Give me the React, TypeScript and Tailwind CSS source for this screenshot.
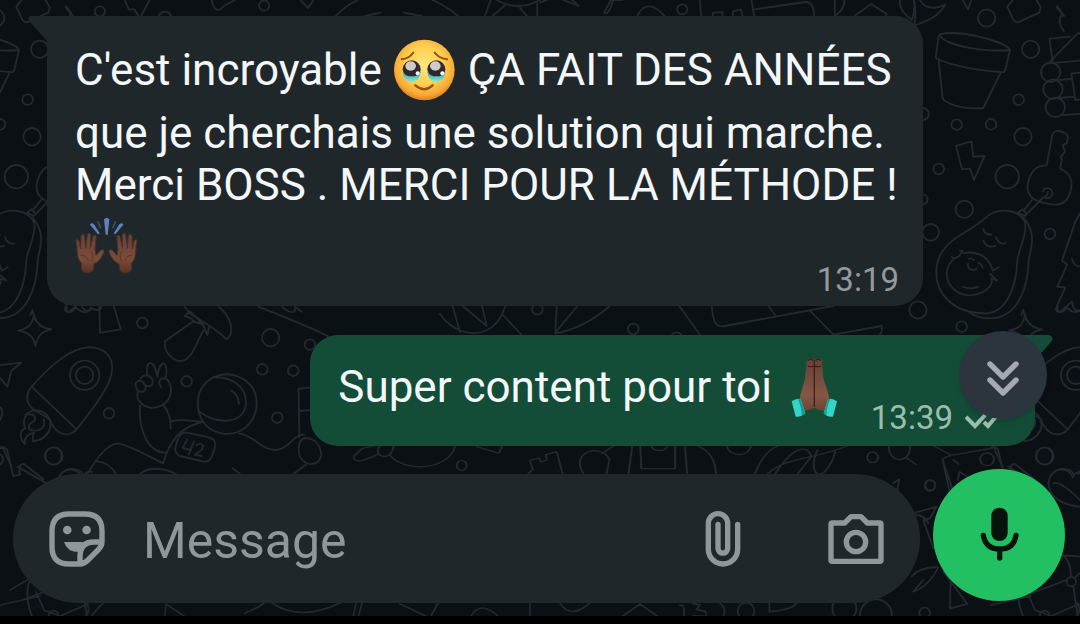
import React from "react";

function DoodleTile() {
  return (
    <g id="doodles">
      <g transform="translate(0 300) scale(0.3333)">
        <path d="M102 42C106 66 122 84 154 88C126 92 112 108 106 138C102 110 88 98 54 92C84 86 98 74 102 42Z" />
        <path d="M95 260C140 210 190 160 245 145C310 132 345 170 335 220C325 270 275 330 230 388ZM95 260C80 275 78 300 88 315C100 335 130 340 150 360C160 385 175 403 200 403C212 402 222 398 230 388" />
        <circle cx="254" cy="226" r="44" />
        <circle cx="254" cy="226" r="26" />
        <path d="M98 332C70 340 68 370 76 385C58 390 58 415 74 432C72 410 85 402 102 398C98 408 96 415 100 424C135 418 158 395 150 360C140 338 122 328 98 332ZM76 345C95 340 110 345 104 362C80 375 82 390 100 392C122 392 136 385 132 358" />
        <circle cx="327" cy="340" r="16" />
        <circle cx="427" cy="69" r="16" />
        <path d="M298 20L300 98L362 88L342 20M200 20C196 40 215 42 228 22C245 42 268 40 272 22C285 34 302 32 304 20" />
        <path d="M410 265C398 245 420 235 432 250C446 270 425 285 410 268M422 236C430 220 455 225 458 242C460 262 440 264 430 250M442 225C434 180 462 172 472 230C478 178 506 176 498 230M484 262C468 240 490 225 505 242C528 285 500 322 452 324C415 315 408 290 414 275M420 316C415 380 440 460 500 458M490 314C505 335 514 360 512 385M512 364C545 356 580 362 608 366C540 380 505 430 490 490C445 470 400 440 355 430C320 432 290 475 262 522M290 484C315 485 335 500 348 522" />
        <circle cx="560" cy="244" r="16" />
        <path d="M640 232C700 205 772 245 770 312C768 370 720 410 665 400C615 390 590 350 594 300C596 270 615 245 640 232ZM640 232C690 230 740 255 738 310C734 375 645 375 598 334M694 272C708 280 716 294 717 311" />
        <path d="M560 398L628 412Q652 420 644 445L634 472Q628 488 608 484L540 468Q520 458 528 436L536 412Q544 396 560 398ZM562 418L548 444L574 450M582 424L566 464M590 436C602 424 618 438 604 450L584 464L606 468" />
        <path d="M718 400C770 410 780 450 830 450C870 446 880 402 912 404M915 414C945 415 962 435 964 465C958 500 915 500 900 470C890 440 900 416 915 414ZM898 412L896 266L940 262M896 333L940 330M918 494L880 522M698 505L720 522" />
        <path d="M554 20C580 60 620 60 680 118C705 100 695 50 656 20M554 48L570 34L595 58L612 80L622 105L628 78M554 48L575 56L582 66L610 72M582 62L495 124C490 165 530 188 550 182C580 170 590 125 610 92" />
        <circle cx="812" cy="113" r="26" />
        <circle cx="930" cy="134" r="16" />
        <circle cx="787" cy="208" r="16" />
        <circle cx="880" cy="212" r="16" />
        <circle cx="832" cy="353" r="16" />
        <circle cx="162" cy="468" r="26" />
        <path d="M775 20C850 50 930 80 990 112M845 20C870 42 890 42 885 20L905 35" />
        <path d="M-40 200L64 188L34 212L22 260L-4 228M0 322Q14 330 0 360M0 442Q16 438 22 452L40 528L60 524C55 500 60 490 72 492L130 538M180 528C195 500 235 500 250 524M420 522C445 500 490 502 528 522" />
      </g>
      <g transform="translate(910 0) scale(0.3333)">
        <path d="M90 103C150 88 290 125 300 150L286 210Q284 218 272 216C190 210 130 200 77 174L86 108ZM90 103C92 130 205 158 300 150M86 180L98 296C120 320 180 328 220 324L272 218" />
        <circle cx="230" cy="54" r="26" />
        <circle cx="362" cy="148" r="26" />
        <circle cx="326" cy="299" r="16" />
        <circle cx="140" cy="374" r="16" />
        <circle cx="243" cy="373" r="16" />
        <circle cx="339" cy="410" r="26" />
        <circle cx="86" cy="507" r="16" />
        <circle cx="292" cy="530" r="35" />
        <circle cx="163" cy="628" r="26" />
        <circle cx="62" cy="697" r="25" />
        <circle cx="38" cy="342" r="18" />
        <circle cx="38" cy="598" r="15" />
        <circle cx="420" cy="702" r="16" />
        <circle cx="24" cy="930" r="26" />
        <path d="M138 438L184 424L190 470L224 468L192 540L180 506L156 508Z" />
        <path d="M158 0L174 28L184 0M292 20L308 0M292 20L310 60L322 68L388 38L392 22L380 0M12 0Q20 40 12 78M30 0C42 25 75 30 106 14C85 50 50 64 14 76M440 22L456 42Q440 65 462 94" />
        <path d="M418 116L480 110M418 116L428 184M415 190L505 98L530 120M415 190L530 180M484 220L530 216M484 220L496 300L530 296M450 240L486 236M450 294L494 290M450 346L530 340" />
        <circle cx="422" cy="217" r="29" />
        <circle cx="429" cy="268" r="29" />
        <circle cx="436" cy="322" r="29" />
        <path d="M410 496L426 410Q430 390 448 393Q476 398 474 415L470 430L458 435L465 455L452 472L456 480L450 506C485 520 490 550 480 580C470 612 445 620 410 610C370 605 345 585 355 545C365 505 385 496 410 496M398 574A15 15 0 1 1 404 592M414 576Q412 590 398 594L344 648L324 638L338 628L350 642M344 628L366 600" />
        <path d="M225 655C260 620 330 625 346 670C350 710 330 735 322 780C320 850 295 940 225 940C130 940 70 880 80 800C90 720 175 700 225 655ZM340 652C380 700 365 735 356 780C354 870 320 955 240 955Q205 955 180 938M126 770L132 776C85 820 120 885 180 886C230 884 252 850 243 836L262 842M150 752L158 752L148 768L132 776M160 760C205 750 240 775 248 812L266 802M240 822L262 842M220 686Q222 704 244 704M258 712Q266 735 286 730M220 722Q230 746 256 738M176 776Q185 775 192 780M174 792C172 812 195 812 200 806M206 788Q216 794 218 804M158 860Q185 870 204 860" />
        <path d="M510 640L496 665L456 782L472 794L442 860L466 862L438 925Q438 938 450 936L486 905Q490 940 515 930M486 776Q492 802 515 800M334 945L340 930L348 960" />
      </g>
      <g transform="translate(440 290) scale(0.3333)">
        <path d="M0 72C45 140 160 165 196 48M38 48L60 126M68 48L140 108L126 48M190 76L244 134M350 48L346 128L412 48M510 48C460 90 410 120 346 130M718 48L780 134M815 48C820 85 820 115 855 108L1180 48M985 48L1005 74M1110 62L1180 134M1180 134L1325 108Q1328 125 1320 134" />
        <circle cx="292" cy="58" r="16" />
        <circle cx="580" cy="117" r="16" />
        <circle cx="710" cy="143" r="16" />
        <circle cx="1565" cy="110" r="16" />
      </g>
      <g transform="translate(300 430) scale(0.4975 0.3333)" strokeWidth="4">
        <path d="M108 80L125 55L160 44M108 80Q108 108 155 74M160 48C145 85 185 95 188 48M180 75C210 130 300 120 312 48M355 50L400 70L406 48M458 132L468 118L462 92L480 84L485 96L496 90L494 74L516 66L528 132M570 132C540 60 610 40 622 90L616 132M608 70L630 48M668 48L660 132M684 48L686 116L754 116L754 48M706 48C710 66 736 66 738 48M774 48L778 132M800 48Q835 70 836 132M858 48C862 82 904 82 906 48M914 132C925 90 940 60 960 48M955 132C990 50 1020 40 1028 80L1000 132M940 132C975 80 1030 90 1100 48M1040 60C1025 110 1035 150 1055 125Q1070 100 1076 65M1184 48C1180 100 1228 104 1226 48M1220 84L1238 104M1274 48L1308 74M1308 76L1395 54L1412 110M1292 92Q1290 84 1308 76M1292 92L1312 180M1322 150L1326 125L1345 145M1455 32Q1475 38 1488 0" />
        <ellipse cx="325" cy="107" rx="10" ry="15" />
        <ellipse cx="1151" cy="82" rx="11" ry="16" />
        <ellipse cx="1267" cy="165" rx="10" ry="15" />
        <ellipse cx="1381" cy="88" rx="14" ry="19" />
        <ellipse cx="1496" cy="78" rx="17" ry="26" />
      </g>
      <g transform="scale(0.3444 0.3333)">
        <path d="M192 18L212 48M362 0L374 28L390 28L402 48M434 0L410 48M614 0Q625 48 650 18L682 0M872 0L895 24L910 0M975 48Q1005 15 1040 0M1060 48L1105 38M1172 38L1225 48M1255 0Q1300 20 1330 48M1425 0L1408 48M1442 0Q1505 36 1568 0M1468 14L1430 48M1510 24L1530 48M1560 10V48" />
        <circle cx="290" cy="34" r="15" />
        <circle cx="767" cy="17" r="15" />
        <circle cx="479" cy="54" r="19" />
      </g>
      <g transform="translate(540 0) scale(0.3444 0.3333)">
        <path d="M0 8L20 0M68 0L112 18L94 0M206 0L186 38Q200 48 212 0L240 0M282 48Q310 -10 362 48M464 0L468 48M614 0L622 48M502 48V38L530 36V48M560 48V34L584 28L588 48M624 28L770 6Q795 4 796 48M856 0L856 48Q885 28 884 0M916 46L962 12L1006 42L1004 48M1045 0Q1040 30 1080 60Q1090 30 1086 0" />
        <circle cx="413" cy="28" r="15" />
      </g>
      <g transform="translate(680 460) scale(0.3333)">
        <path d="M788 0L812 110M820 0L836 12M985 20L1090 80M640 70L658 58L652 90M705 158L770 140L750 175L730 180L760 265M745 190Q735 165 705 165M695 350Q720 320 775 322Q745 380 700 395L730 360M790 335L862 432L810 446L812 360M1200 140C1080 130 1090 30 1145 28Q1170 30 1178 52Q1190 30 1210 36M1120 70Q1140 60 1200 120M1030 470C980 350 1060 270 1200 290M1000 420L1160 360M1180 380L1195 480M1185 352L1210 330M1150 285Q1175 310 1172 350" />
        <circle cx="750" cy="77" r="16" />
        <circle cx="1174" cy="365" r="14" />
        <circle cx="1094" cy="466" r="14" />
        <circle cx="198" cy="453" r="25" />
        <circle cx="734" cy="459" r="16" />
        <circle cx="493" cy="446" r="36" />
        <circle cx="588" cy="466" r="48" />
        <path d="M268 430V455Q330 450 350 430M0 436Q15 430 12 470M38 430L60 435L50 448L76 454L80 470L40 468M120 430Q140 445 130 470" />
      </g>
      <path
        strokeWidth="1.7"
        d="M36 592L44 610L60 616M86 603Q92 610 84 618M103 603Q96 610 90 618M60 616L88 604M164 624L166 604L184 616M245 613Q258 608 264 603M272 603Q300 622 340 603M356 603L353 618M362 603L358 618M400 604L430 618L438 603M470 618Q480 598 500 618M530 603V618M560 603Q570 620 590 603M620 618L640 604L660 618M10 590L36 575M0 605L40 596"
      />
    </g>
  );
}

function Wallpaper() {
  return (
    <svg
      aria-hidden="true"
      className="pointer-events-none absolute inset-0 h-full w-full"
      fill="none"
      stroke="#24292e"
      strokeWidth="5.5"
      strokeLinecap="round"
      strokeLinejoin="round"
    >
      <DoodleTile />
      <use href="#doodles" x="-991" />
      <use href="#doodles" x="991" />
    </svg>
  );
}

function TearyFace() {
  return (
    <svg role="img" aria-label="Visage retenant ses larmes" viewBox="0 0 192 216" className="inline-block h-[72px] w-16 align-[-22px]">
      <defs>
        <radialGradient id="face" cx="0.5" cy="0.42" r="0.58">
          <stop offset="0" stopColor="#ffe680" />
          <stop offset="0.55" stopColor="#fdcf50" />
          <stop offset="0.85" stopColor="#f8a934" />
          <stop offset="1" stopColor="#e07c1c" />
        </radialGradient>
        <linearGradient id="tear" x1="0" y1="0" x2="0" y2="1">
          <stop offset="0" stopColor="#278f99" />
          <stop offset="1" stopColor="#7deadb" />
        </linearGradient>
      </defs>
      <circle cx="94" cy="105" r="91" fill="url(#face)" />
      <g fill="none" stroke="#94520f" strokeWidth="6" strokeLinecap="round">
        <path d="M26 73Q48 71 61 53M125 53Q140 71 162 73" />
        <path d="M67 151Q94 174 119 151" strokeWidth="7" />
      </g>
      {[56, 130].map((x) => (
        <g key={x}>
          <circle cx={x} cy="103" r="27" fill="#38292c" />
          <path d={`M${x - 27} 112Q${x} 96 ${x + 27} 112Q${x + 24} 140 ${x} 140Q${x - 24} 140 ${x - 27} 112Z`} fill="url(#tear)" />
          <ellipse cx={x} cy="112" rx="23" ry="12" fill="#2c292d" />
          <ellipse cx={x - 3} cy="93" rx="16" ry="14" fill="#d0cbc9" />
          <circle cx={x + 18} cy="115" r="6" fill="#fff" />
        </g>
      ))}
    </svg>
  );
}

function RaisedHands() {
  const hand =
    "M61 190L62 175C50 164 48 145 48 125L45 108C45 102 51 102 54 108L59 132L60 94C61 86 70 86 71 94L74 130L79 90C80 82 89 83 89 91L88 130L96 95C99 88 107 91 105 99L102 135L105 151L119 136C125 131 132 136 128 143C120 162 112 171 99 177L98 190C98 208 62 208 61 190Z";
  return (
    <svg role="img" aria-label="Mains levées" viewBox="42 18 192 216" className="inline-block h-[72px] w-16 align-[-22px]">
      <defs>
        <linearGradient id="palm" x1="0" y1="0" x2="0" y2="1">
          <stop offset="0" stopColor="#664236" />
          <stop offset="0.65" stopColor="#7c4b38" />
          <stop offset="1" stopColor="#593226" />
        </linearGradient>
      </defs>
      <g fill="url(#palm)" stroke="#46322c" strokeWidth="3">
        <path d={hand} />
        <path d={hand} transform="translate(273 0) scale(-1 1)" />
      </g>
      <path d="M60 151Q78 151 82 168M90 139Q101 151 91 169M213 151Q195 151 191 168M183 139Q172 151 182 169" fill="none" stroke="#5b3328" strokeWidth="3" />
      <path d="M129 43Q137 33 145 43L140 89H134ZM87 59Q91 51 99 58L116 85L111 88ZM187 59Q183 51 175 58L158 85L163 88Z" fill="#5f82bd" />
      <path d="M108 50L113 48L121 69L117 71ZM166 50L161 48L153 69L157 71Z" fill="#3a4f6e" />
    </svg>
  );
}

function FoldedHands() {
  return (
    <svg role="img" aria-label="Mains jointes" viewBox="38 94 192 216" className="inline-block h-[72px] w-16 align-[-22px]">
      <defs>
        <linearGradient id="arms" x1="0" y1="0" x2="0" y2="1">
          <stop offset="0" stopColor="#634035" />
          <stop offset="0.7" stopColor="#865645" />
          <stop offset="1" stopColor="#6c4234" />
        </linearGradient>
      </defs>
      <path d="M109 122C110 110 126 109 132 117C139 109 154 110 155 122L158 165C161 188 173 206 177 235L166 272Q148 270 132 262Q116 270 99 272L88 238C92 206 103 188 105 165Z" fill="url(#arms)" />
      <path d="M132 117V258M112 136Q121 140 131 136Q144 140 153 136M113 120Q121 110 128 120M136 120Q144 110 151 120" fill="none" stroke="#3c211b" strokeWidth="4" />
      <path d="M64 242Q77 232 91 235L105 278Q91 291 76 288Z" fill="#32d5c7" />
      <path d="M200 242Q187 232 173 235L160 278Q172 291 188 288Z" fill="#32d5c7" />
      <path d="M91 235L105 278L94 285Q93 257 83 236ZM173 235L160 278L168 284Q169 257 180 235Z" fill="#1b9a93" />
    </svg>
  );
}

function StickerIcon() {
  return (
    <svg viewBox="0 0 56 56" className="h-14 w-14" fill="none" stroke="currentColor" strokeWidth="5.4" strokeLinejoin="round" aria-hidden="true">
      <path d="M32 53H20Q3 53 3 36V20Q3 3 20 3H36Q53 3 53 20V31Q53 35 49 39L39 49Q35 53 31 53V46Q31 31 45 31H53" />
      <path d="M15 31H34L30 41Q18 41 15 31Z" fill="currentColor" stroke="none" />
      <circle cx="18.3" cy="19" r="4.3" fill="currentColor" stroke="none" />
      <circle cx="37.6" cy="19" r="4.3" fill="currentColor" stroke="none" />
    </svg>
  );
}

function ClipIcon() {
  return (
    <svg viewBox="70 144 120 180" className="h-[60px] w-10" fill="none" stroke="currentColor" strokeWidth="16" strokeLinecap="round" aria-hidden="true">
      <path d="M174 190V265A44 44 0 0 1 86 265V187A29 29 0 0 1 144 187V262A14.5 14.5 0 0 1 115 262V190" />
    </svg>
  );
}

function CameraIcon() {
  return (
    <svg viewBox="444 149 168 168" className="h-14 w-14" fill="none" stroke="currentColor" strokeWidth="16" strokeLinejoin="round" aria-hidden="true">
      <path d="M457 185H494L513 166H543L562 185H599Q603 185 603 189V296Q603 300 599 300H457Q453 300 453 296V189Q453 185 457 185Z" />
      <circle cx="528" cy="242" r="29" />
    </svg>
  );
}

function MicIcon() {
  return (
    <svg viewBox="889 133 135 180" className="h-[60px] w-[45px]" fill="none" stroke="currentColor" strokeWidth="16" strokeLinecap="round" aria-hidden="true">
      <rect x="932" y="141" width="49" height="100" rx="24" fill="currentColor" stroke="none" />
      <path d="M908 224Q915 265 957 265Q999 265 1006 224M957 267V292" />
    </svg>
  );
}

export default function App() {
  return (
    <main className="relative flex min-h-screen flex-col overflow-hidden bg-[#0b1014] font-['Roboto',sans-serif] text-[#f4f7f9]">
      <Wallpaper />

      <section aria-label="Messages" className="relative flex flex-col gap-[29px] pt-4 pr-[45px] pl-[47px]">
        <article className="relative mr-28 rounded-[28px] rounded-tl-none bg-[#20272a] pt-[19px] pr-5 pb-[23px] pl-7">
          <svg viewBox="0 0 20 25" className="absolute top-0 -left-5 h-[25px] w-5" aria-hidden="true">
            <path d="M20 0H5Q-1 0 3 6L20 25Z" fill="#20272a" />
          </svg>
          <p className="text-[44px] leading-[52px]">
            C'est incroyable <TearyFace /> ÇA FAIT DES ANNÉES que je cherchais une solution qui marche. Merci BOSS .
            MERCI POUR LA MÉTHODE ! <RaisedHands />
          </p>
          <time className="absolute right-6 bottom-2 text-[33px] leading-9 text-[#93999c]">13:19</time>
        </article>

        <article className="relative flex items-end self-end rounded-[28px] rounded-tr-none bg-[#144d37] pt-[17px] pr-9 pb-[22px] pl-7">
          <svg viewBox="0 0 20 25" className="absolute top-0 -right-[18px] h-[25px] w-5" aria-hidden="true">
            <path d="M0 0H15Q22 1 18 7L2 25H0Z" fill="#144d37" />
          </svg>
          <p className="text-[44px] leading-[52px] whitespace-nowrap">
            Super content pour toi <FoldedHands />
          </p>
          <div className="-mb-3 ml-6 flex items-center gap-3 text-[#9abdac]">
            <time className="text-[33px] leading-9">13:39</time>
            <svg viewBox="0 0 34 24" className="h-6 w-[34px]" fill="none" stroke="currentColor" strokeWidth="4" aria-label="Distribué">
              <path d="M1 11L10 20L22 7M19 16L23 20L34 7" />
            </svg>
          </div>
          <button type="button" aria-label="Aller en bas" className="absolute -top-1 -right-3 flex h-[88px] w-[88px] items-center justify-center rounded-full bg-[#2c353e] text-[#a3aab3] shadow-md">
            <svg viewBox="0 0 36 40" className="mt-2 h-10 w-9" fill="none" stroke="currentColor" strokeWidth="5.4" strokeLinecap="round" strokeLinejoin="round" aria-hidden="true">
              <path d="M5 5L18 18L31 5M5 21L18 34L31 21" />
            </svg>
          </button>
        </article>
      </section>

      <form className="relative mt-auto flex items-start gap-[13px] pt-[23px] pr-[15px] pb-[13px] pl-[13px]" onSubmit={(event) => event.preventDefault()}>
        <div className="mt-[5px] flex h-[129px] min-w-0 flex-1 items-center rounded-full bg-[#20272a] pr-9 pl-9 text-[#8f979a]">
          <button type="button" aria-label="Autocollants" className="shrink-0">
            <StickerIcon />
          </button>
          <input
            type="text"
            aria-label="Message"
            placeholder="Message"
            className="ml-[38px] min-w-0 flex-1 bg-transparent pt-1 text-[50px] leading-[60px] text-white outline-none placeholder:text-[#8f979a]"
          />
          <button type="button" aria-label="Joindre un fichier" className="shrink-0">
            <ClipIcon />
          </button>
          <button type="button" aria-label="Appareil photo" className="ml-[85px] shrink-0">
            <CameraIcon />
          </button>
        </div>
        <button type="button" aria-label="Message vocal" className="flex h-[132px] w-[132px] shrink-0 items-center justify-center rounded-full bg-[#23c063] text-[#07130d]">
          <MicIcon />
        </button>
      </form>
      <div className="relative h-2 bg-black" />
    </main>
  );
}
